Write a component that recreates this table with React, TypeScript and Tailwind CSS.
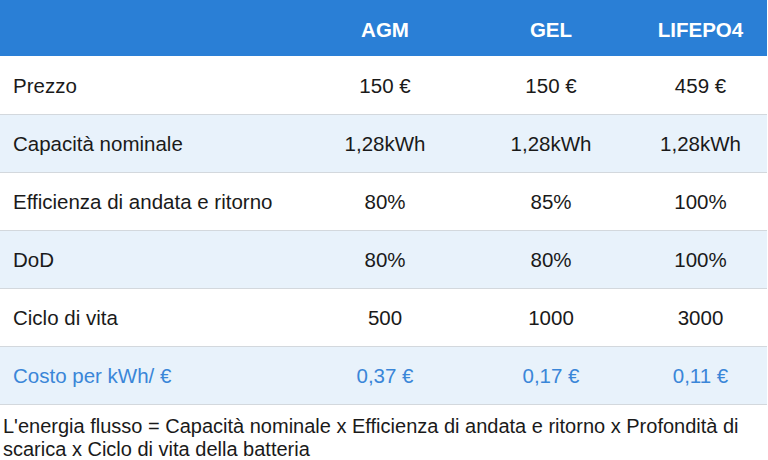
const rows = [
  { label: 'Prezzo', agm: '150 €', gel: '150 €', lfp: '459 €' },
  { label: 'Capacità nominale', agm: '1,28kWh', gel: '1,28kWh', lfp: '1,28kWh' },
  { label: 'Efficienza di andata e ritorno', agm: '80%', gel: '85%', lfp: '100%' },
  { label: 'DoD', agm: '80%', gel: '80%', lfp: '100%' },
  { label: 'Ciclo di vita', agm: '500', gel: '1000', lfp: '3000' },
  { label: 'Costo per kWh/ €', agm: '0,37 €', gel: '0,17 €', lfp: '0,11 €', highlight: true },
];

export default function App() {
  return (
    <div
      className="h-[460px] w-[768px] overflow-hidden bg-white text-[20.5px] text-[#1a1a1a]"
      style={{ fontFamily: '"Liberation Sans", Arial, sans-serif' }}
    >
      <table className="w-[767px] border-collapse">
        <thead>
          <tr className="h-[56px] bg-[#2a7fd6] text-white">
            <th className="w-[302px]"></th>
            <th className="w-[166px] pt-[4px] text-center font-bold">AGM</th>
            <th className="w-[166px] pt-[4px] text-center font-bold">GEL</th>
            <th className="pt-[4px] text-center font-bold">LIFEPO4</th>
          </tr>
        </thead>
        <tbody>
          {rows.map((row, i) => (
            <tr
              key={row.label}
              className={`h-[58px] border-b border-[#d3d8dd] ${i % 2 === 1 ? 'bg-[#e8f2fb]' : 'bg-white'} ${
                row.highlight ? 'text-[#3a86d8]' : ''
              }`}
            >
              <td className="pl-[13px] pt-[3px] text-left">{row.label}</td>
              <td className="pt-[3px] text-center">{row.agm}</td>
              <td className="pt-[3px] text-center">{row.gel}</td>
              <td className="pt-[3px] text-center">{row.lfp}</td>
            </tr>
          ))}
        </tbody>
      </table>
      <p className="mt-[10px] pl-[3px] pr-[20px] text-[20px] leading-[23px]">
        L'energia flusso = Capacità nominale x Efficienza di andata e ritorno x Profondità di scarica x Ciclo di
        vita della batteria
      </p>
    </div>
  );
}
